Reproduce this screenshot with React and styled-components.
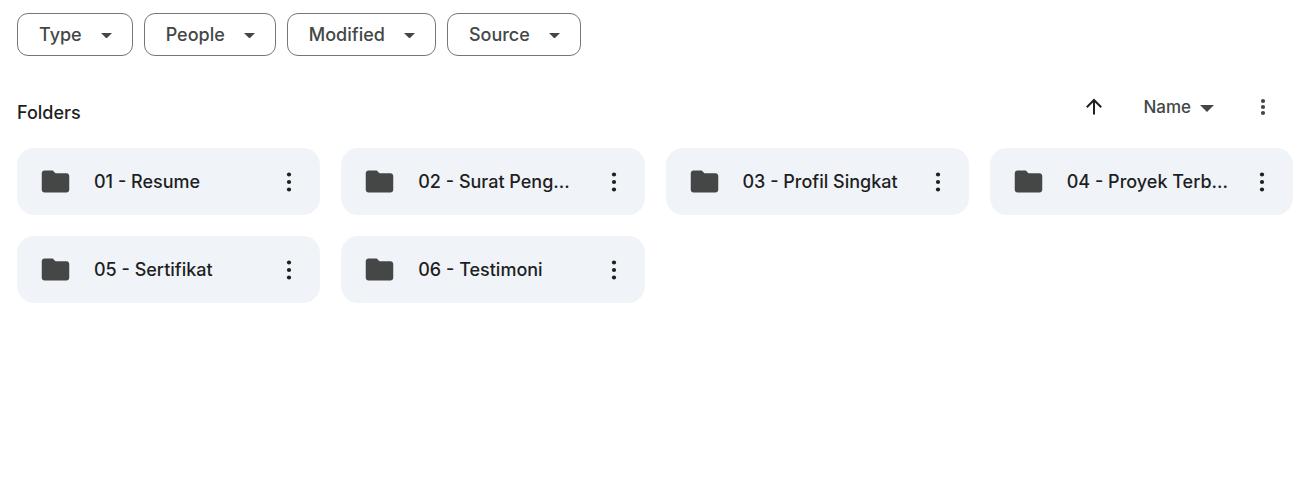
import React from "react";
import styled, { createGlobalStyle } from "styled-components";

const filters = ["Type", "People", "Modified", "Source"];

const folders = [
  "01 - Resume",
  "02 - Surat Peng...",
  "03 - Profil Singkat",
  "04 - Proyek Terb...",
  "05 - Sertifikat",
  "06 - Testimoni",
];

const App = () => {
  return (
    <>
      <GlobalStyle />
      <Page>
        <Filters>
          {filters.map((name) => (
            <Chip key={name} type="button">
              {name}
              <Caret $width={11} />
            </Chip>
          ))}
        </Filters>
        <Header>
          <h2>Folders</h2>
          <Sorting>
            <IconButton type="button" aria-label="Reverse sort direction">
              <ArrowUp />
            </IconButton>
            <SortButton type="button">
              Name
              <Caret $width={14} />
            </SortButton>
            <IconButton type="button" aria-label="More sorting options">
              <Dots step={6} color="#444746" />
            </IconButton>
          </Sorting>
        </Header>
        <Grid>
          {folders.map((name) => (
            <Folder key={name}>
              <FolderIcon />
              <FolderName>{name}</FolderName>
              <IconButton type="button" aria-label={`Actions for ${name}`}>
                <Dots step={7.5} color="#1f1f1f" />
              </IconButton>
            </Folder>
          ))}
        </Grid>
      </Page>
    </>
  );
};

const Caret = ({ $width }) => (
  <CaretIcon $width={$width} viewBox="0 0 10 5" aria-hidden="true">
    <path d="M0 0h10L5 5z" />
  </CaretIcon>
);

const ArrowUp = () => (
  <svg width="24" height="24" viewBox="0 0 24 24" aria-hidden="true">
    <path
      d="M12 19.5V5M4.8 12.2 12 5l7.2 7.2"
      fill="none"
      stroke="#1f1f1f"
      strokeWidth="2"
    />
  </svg>
);

const Dots = ({ step, color }) => (
  <svg width="24" height="24" viewBox="0 0 24 24" fill={color} aria-hidden="true">
    <circle cx="12" cy={12 - step} r="2.1" />
    <circle cx="12" cy="12" r="2.1" />
    <circle cx="12" cy={12 + step} r="2.1" />
  </svg>
);

const FolderIcon = () => (
  <FolderSvg viewBox="0 0 24 24" aria-hidden="true">
    <path d="M10 4H4c-1.1 0-1.99.9-1.99 2L2 18c0 1.1.9 2 2 2h16c1.1 0 2-.9 2-2V8c0-1.1-.9-2-2-2h-8l-2-2z" />
  </FolderSvg>
);

//Styled Components

const GlobalStyle = createGlobalStyle`
  * {
    box-sizing: border-box;
  }
  body {
    margin: 0;
    background: #fff;
    color: #1f1f1f;
    font-family: Inter, "Liberation Sans", sans-serif;
  }
  button {
    border: none;
    background: none;
    color: #444746;
    font-family: inherit;
    font-weight: 500;
    cursor: pointer;
  }
`;

const Page = styled.main`
  padding: 13px 16px 13px 17px;
`;

const Filters = styled.div`
  display: flex;
  flex-wrap: wrap;
  gap: 11px;
`;

const Chip = styled.button`
  display: flex;
  align-items: center;
  gap: 19px;
  height: 43px;
  padding: 0 20px 0 21px;
  border: 1px solid #747775;
  border-radius: 11px;
  font-size: 18px;
`;

const CaretIcon = styled.svg`
  width: ${(props) => props.$width}px;
  flex: none;
  margin-top: 2px;
  fill: #444746;
`;

const Header = styled.div`
  display: flex;
  align-items: flex-start;
  justify-content: space-between;
  padding: 39px 18px 24px 0;
  h2 {
    margin: 7px 0 0;
    font-size: 18px;
    font-weight: 500;
    line-height: 22px;
  }
`;

const Sorting = styled.div`
  display: flex;
  align-items: center;
`;

const IconButton = styled.button`
  display: flex;
  flex: none;
  padding: 0;
`;

const SortButton = styled.button`
  display: flex;
  align-items: center;
  gap: 9px;
  margin: 0 37px;
  padding: 0;
  font-size: 17px;
`;

const Grid = styled.div`
  display: grid;
  grid-template-columns: repeat(4, minmax(0, 1fr));
  gap: 21px;
`;

const Folder = styled.article`
  display: flex;
  align-items: center;
  height: 67px;
  padding: 0 19px 0 22px;
  border-radius: 17px;
  background: #f0f4f9;
`;

const FolderSvg = styled.svg`
  width: 33px;
  flex: none;
  fill: #444746;
`;

const FolderName = styled.span`
  flex: 1;
  min-width: 0;
  padding-left: 22px;
  font-size: 18px;
  font-weight: 500;
  line-height: 24px;
  white-space: nowrap;
`;

export default App;
